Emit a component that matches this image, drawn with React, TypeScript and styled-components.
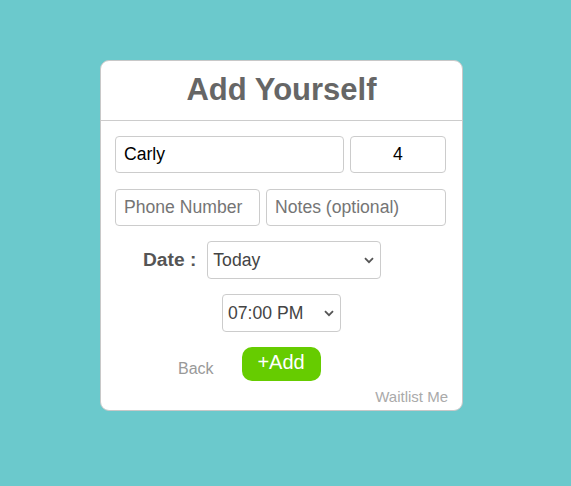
import React, { useState } from "react";
import styled, { createGlobalStyle } from "styled-components";

const GlobalStyle = createGlobalStyle`
  html, body {
    margin: 0;
    padding: 0;
    background: #6bc9cc;
    font-family: "Liberation Sans", Arial, sans-serif;
  }
`;

const Page = styled.div`
  min-height: 486px;
  padding: 60px 0 0 100px;
  box-sizing: border-box;
`;

const Card = styled.div`
  width: 363px;
  height: 351px;
  box-sizing: border-box;
  background: #fff;
  border: 1px solid #c8c8c8;
  border-radius: 9px;
  display: flex;
  flex-direction: column;
`;

const Header = styled.div`
  height: 59px;
  border-bottom: 1px solid #cccccc;
  display: flex;
  align-items: center;
  justify-content: center;
`;

const Title = styled.h1`
  margin: 0;
  font-size: 31px;
  font-weight: bold;
  color: #666666;
  padding-bottom: 1px;
`;

const Body = styled.div`
  padding: 15px 16px 0 14px;
  display: flex;
  flex-direction: column;
  gap: 16px;
`;

const Row = styled.div<{ $indent?: number; $gap?: number; $center?: boolean; $pull?: number }>`
  display: flex;
  align-items: center;
  gap: ${({ $gap }) => $gap ?? 6}px;
  padding-left: ${({ $indent }) => $indent ?? 0}px;
  margin-top: ${({ $pull }) => -($pull ?? 0)}px;
  justify-content: ${({ $center }) => ($center ? "center" : "flex-start")};
`;

const Field = styled.input<{ $w: number; $center?: boolean }>`
  width: ${({ $w }) => $w}px;
  height: 37px;
  box-sizing: border-box;
  border: 1px solid #cccccc;
  border-radius: 4px;
  padding: 0 8px;
  font-family: "Liberation Sans", Arial, sans-serif;
  font-size: 17.6px;
  color: #000;
  text-align: ${({ $center }) => ($center ? "center" : "left")};
  outline: none;

  &::placeholder {
    color: #757575;
  }
`;

const Label = styled.span`
  font-size: 19.2px;
  font-weight: bold;
  color: #555555;
`;

const SelectWrap = styled.div<{ $w: number }>`
  position: relative;
  width: ${({ $w }) => $w}px;
  height: 38px;
`;

const Select = styled.select`
  appearance: none;
  width: 100%;
  height: 100%;
  box-sizing: border-box;
  border: 1px solid #cccccc;
  border-radius: 4px;
  padding: 0 24px 0 5px;
  background: #fff;
  font-family: "Liberation Sans", Arial, sans-serif;
  font-size: 17.6px;
  color: #444444;
  outline: none;
`;

const Chevron = styled.svg`
  position: absolute;
  right: 7px;
  top: 50%;
  margin-top: -3px;
  width: 10px;
  height: 7px;
  pointer-events: none;
`;

const Actions = styled.div`
  display: flex;
  align-items: flex-end;
  gap: 28px;
  padding-left: 63px;
  margin-top: -1px;
`;

const BackLink = styled.span`
  font-size: 16px;
  color: #999999;
  padding-bottom: 3px;
`;

const AddButton = styled.button`
  width: 79px;
  height: 34px;
  border: none;
  border-radius: 10px;
  background: #66cc00;
  color: #fff;
  font-family: "Liberation Sans", Arial, sans-serif;
  font-size: 20px;
  padding: 0 0 4px;
  cursor: pointer;
`;

const Footer = styled.div`
  text-align: right;
  padding: 7px 14px 0 0;
  font-size: 15px;
  color: #aaaaaa;
`;

type DropProps = { w: number; value: string; options: [string, string][] };

const Dropdown = ({ w, value, options }: DropProps) => (
  <SelectWrap $w={w}>
    <Select defaultValue={value}>
      {options.map(([v, l]) => (
        <option key={v} value={v}>
          {l}
        </option>
      ))}
    </Select>
    <Chevron viewBox="0 0 10 7">
      <path d="M1 1.2 L5 5.2 L9 1.2" fill="none" stroke="#555" strokeWidth="1.8" />
    </Chevron>
  </SelectWrap>
);

export default function App() {
  const [name, setName] = useState("Carly");
  const [size, setSize] = useState("4");

  return (
    <>
      <GlobalStyle />
      <Page>
        <Card>
          <Header>
            <Title>Add Yourself</Title>
          </Header>
          <Body>
            <Row>
              <Field $w={229} value={name} onChange={(e) => setName(e.target.value)} />
              <Field $w={96} $center value={size} onChange={(e) => setSize(e.target.value)} />
            </Row>
            <Row>
              <Field $w={145} placeholder="Phone Number" />
              <Field $w={180} placeholder="Notes (optional)" />
            </Row>
            <Row $indent={28} $gap={11} $pull={1}>
              <Label>Date :</Label>
              <Dropdown
                w={174}
                value="today"
                options={[
                  ["today", "Today"],
                  ["tomorrow", "Tomorrow"],
                ]}
              />
            </Row>
            <Row $center $indent={2} $pull={1}>
              <Dropdown
                w={119}
                value="1900"
                options={[
                  ["1800", "06:00 PM"],
                  ["1900", "07:00 PM"],
                  ["2000", "08:00 PM"],
                ]}
              />
            </Row>
            <Actions>
              <BackLink>Back</BackLink>
              <AddButton>+Add</AddButton>
            </Actions>
          </Body>
          <Footer>Waitlist Me</Footer>
        </Card>
      </Page>
    </>
  );
}
